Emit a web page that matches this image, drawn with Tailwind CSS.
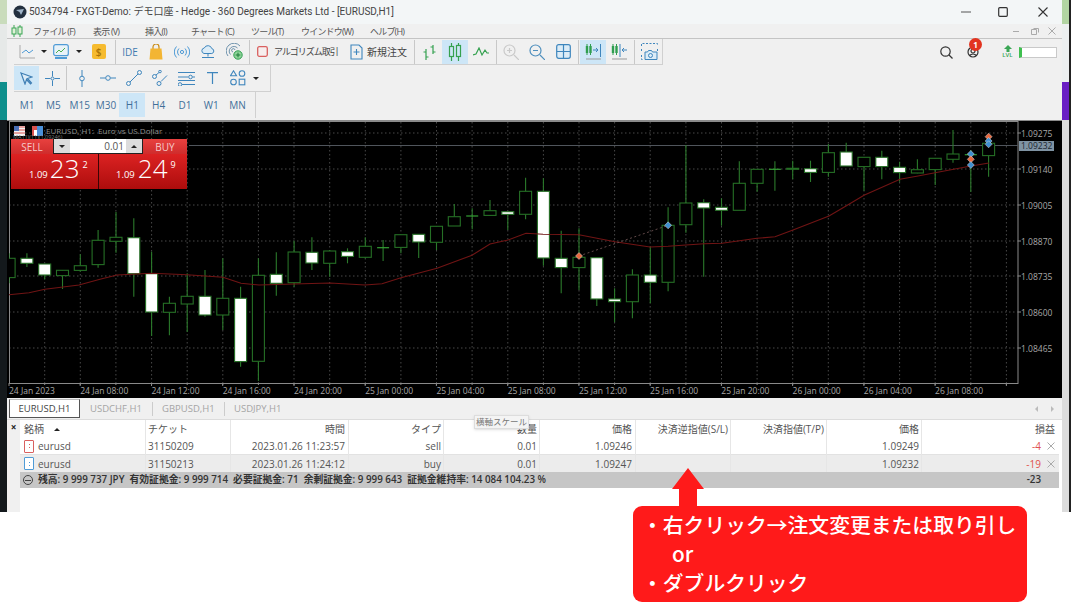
<!DOCTYPE html>
<html lang="ja">
<head>
<meta charset="UTF-8">
<title>5034794 - FXGT-Demo</title>
<script src="https://cdn.jsdelivr.net/npm/@tailwindcss/browser@4"></script>
</head>
<body class="relative w-[1080px] h-[608px] overflow-hidden bg-white text-[#333] font-['Open_Sans','Noto_Sans_CJK_JP',sans-serif]">

<div class="flex h-[512px]">
    <!-- desktop behind the window, left edge -->
    <div class="flex flex-col w-[7px] shrink-0">
        <div class="h-[24px] bg-[#c9dcbc]"></div>
        <div class="h-[58px] bg-[#e6e9e8]"></div>
        <div class="h-[38px] bg-[#0e8f8c]"></div>
        <div class="flex-1 bg-[#14191c]"></div>
    </div>

    <div class="flex flex-col w-[1055px] shrink-0 bg-[#f0f0f0]">
        <!-- title bar -->
        <div class="flex items-center h-[24px] bg-[#f3f6f7]">
            <svg class="ml-[6px] w-[14px] h-[14px]" viewBox="0 0 14 14"><circle cx="7" cy="7" r="6.5" fill="#22303f"/><path d="M3 5l8-1-3 6-1.500-3z" fill="#9fb4c8"/></svg>
            <span class="ml-[2px] text-[10px] leading-none text-[#444] whitespace-nowrap font-['Roboto','Noto_Sans_CJK_JP',sans-serif]">5034794 - FXGT-Demo: デモ口座 - Hedge - 360 Degrees Markets Ltd - [EURUSD,H1]</span>
            <div class="flex-1"></div>
            <svg class="w-[10px] h-[10px] mr-[27px]" viewBox="0 0 10 10"><path d="M0 5h10" stroke="#555" stroke-width="1"/></svg>
            <svg class="w-[10px] h-[10px] mr-[30px]" viewBox="0 0 10 10"><rect x="0.700" y="0.700" width="8.600" height="8.600" rx="1" fill="none" stroke="#333" stroke-width="1.200"/></svg>
            <svg class="w-[10px] h-[10px] mr-[14px]" viewBox="0 0 10 10"><path d="M.5.500l9 9M9.500.500l-9 9" stroke="#333" stroke-width="1.100"/></svg>
        </div>

        <!-- menu bar -->
        <div class="flex items-center h-[14px] text-[9px] tracking-[-0.8px] leading-none text-[#555] border-b border-[#c4c4c4] box-content">
            <svg class="ml-[4px] w-[12px] h-[12px]" viewBox="0 0 12 12"><path d="M3 0v12M9 0v12" stroke="#3aa655"/><rect x="1" y="3" width="4" height="6" fill="#dff0d8" stroke="#3aa655"/><rect x="7" y="2" width="4" height="7" fill="#dff0d8" stroke="#3aa655"/></svg>
            <span class="ml-[10px] w-[60px] whitespace-nowrap">ファイル (F)</span>
            <span class="w-[52px] whitespace-nowrap">表示 (V)</span>
            <span class="w-[46px] whitespace-nowrap">挿入(I)</span>
            <span class="w-[60px] whitespace-nowrap">チャート (C)</span>
            <span class="w-[50px] whitespace-nowrap">ツール(T)</span>
            <span class="w-[69px] whitespace-nowrap">ウインドウ(W)</span>
            <span class="whitespace-nowrap">ヘルプ(H)</span>
            <div class="flex-1"></div>
            <span class="w-[6px] h-px bg-[#aaa] mr-[12px]"></span>
            <svg class="w-[8px] h-[8px] mr-[9px]" viewBox="0 0 8 8"><path d="M2.500 1.500h5v4M.5 2.500h5v5h-5z" fill="none" stroke="#aaa"/></svg>
            <svg class="w-[8px] h-[8px] mr-[6px]" viewBox="0 0 8 8"><path d="M.5.500l7 7M7.500.500l-7 7" stroke="#aaa"/></svg>
        </div>

        <!-- main toolbar -->
        <div class="flex items-center h-[26px] pl-[7px] text-[10px] leading-none">
            <div class="flex items-center h-[26px] border-r border-b border-[#d0d0d0]">
                <div class="flex items-center justify-center w-[25px] h-[24px]"><svg class="w-[16px] h-[15px]" viewBox="0 0 16 15" fill="none"><path d="M1 1v13h15" stroke="#aaa"/><path d="M3 9l4-3 3 3 4-3" stroke="#4f9bd6"/></svg></div>
                <div class="flex items-center justify-center w-[9px]"><span class="border-x-[3px] border-t-[3px] border-x-transparent border-t-[#222]"></span></div>
                <div class="flex items-center justify-center w-[26px] h-[24px]"><svg class="w-[16px] h-[16px]" viewBox="0 0 16 16" fill="none"><rect x=".7" y=".7" width="14.600" height="11" rx="2" fill="#e8f2f8" stroke="#4f9bd6" stroke-width="1.200"/><path d="M3 9l3-3 2 2 4-4" stroke="#4caf50"/><path d="M2 14h12" stroke="#4f9bd6" stroke-width="2"/></svg></div>
                <div class="flex items-center justify-center w-[10px]"><span class="border-x-[3px] border-t-[3px] border-x-transparent border-t-[#222]"></span></div>
                <div class="flex items-center justify-center w-[29px] h-[24px]"><span class="flex items-center justify-center w-[14px] h-[15px] rounded-[2px] bg-[#f6bb2f] text-[10px] font-semibold text-[#a87406]">$</span></div>
                <div class="flex justify-center w-[4px]"><span class="w-px h-[24px] bg-[#c8c8c8]"></span></div>
                <div class="flex items-center justify-center w-[26px] text-[10px] text-[#3f7bb0]">IDE</div>
                <div class="flex items-center justify-center w-[26px]"><svg class="w-[14px] h-[16px]" viewBox="0 0 14 16" fill="none"><path d="M4 6V3a3 3 0 0 1 6 0v3" stroke="#c98a12" stroke-width="1.200"/><path d="M1.500 4.500h11l1 11h-13z" fill="#f3b533"/></svg></div>
                <div class="flex items-center justify-center w-[26px]"><svg class="w-[16px] h-[12px]" viewBox="0 0 16 12" fill="none" stroke="#4f9bd6"><circle cx="8" cy="6" r="1.600"/><path d="M5 2.500a5 5 0 0 0 0 7M11 2.500a5 5 0 0 1 0 7M2.500.5a8 8 0 0 0 0 11M13.500.5a8 8 0 0 1 0 11"/></svg></div>
                <div class="flex items-center justify-center w-[26px]"><svg class="w-[16px] h-[14px]" viewBox="0 0 16 14" fill="none" stroke="#3f86bd"><path d="M4 8.500a2.800 2.800 0 0 1 .3-5.500 4 4 0 0 1 7.500.6 2.500 2.500 0 0 1 0 4.900z" fill="#dcecf7"/><path d="M8 8.500v3M2 12.500h12"/></svg></div>
                <div class="flex items-center justify-center w-[26px]"><svg class="w-[17px] h-[17px]" viewBox="0 0 17 17" fill="none" stroke="#6f93ad"><path d="M2 13A7.500 7.500 0 1 1 14 3"/><path d="M4.500 11.500A4.500 4.500 0 1 1 11.500 5"/><path d="M7 9a1.700 1.700 0 1 1 2-2"/><circle cx="12" cy="12" r="4.200" fill="#8fd39a" stroke="#2f9e4f"/><path d="M12 9.700v4.600M9.700 12h4.600" stroke="#1e7d3b"/></svg></div>
                <div class="flex justify-center w-[4px]"><span class="w-px h-[24px] bg-[#c8c8c8]"></span></div>
                <div class="flex items-center justify-center w-[23px]"><svg class="w-[11px] h-[11px]" viewBox="0 0 11 11"><rect x=".7" y=".7" width="9.600" height="9.600" rx="1.500" fill="#f6eeee" stroke="#d9605f" stroke-width="1.300"/></svg></div>
                <span class="w-[71px] whitespace-nowrap text-[9px] tracking-[-1px] text-[#444]">アルゴリズム取引</span>
                <div class="flex items-center justify-center w-[22px]"><svg class="w-[13px] h-[16px]" viewBox="0 0 13 16" fill="none" stroke="#3f86bd" stroke-width="1.100"><path d="M1 1h8l3 3v11H1z"/><path d="M6.500 5v6M3.500 8h6"/></svg></div>
                <span class="w-[45px] whitespace-nowrap text-[#444]">新規注文</span>
                <div class="flex justify-center w-[4px]"><span class="w-px h-[24px] bg-[#c8c8c8]"></span></div>
                <div class="flex items-center justify-center w-[26px]"><svg class="w-[15px] h-[16px]" viewBox="0 0 15 16" fill="none" stroke="#35a150" stroke-width="1.200"><path d="M4 5v11M1.500 8H4M4 13h2.500M11 1v9M8.500 3H11M11 8h2.500"/></svg></div>
                <div class="flex items-center justify-center w-[26px] h-[24px] bg-[#cde6f7]"><svg class="w-[14px] h-[18px]" viewBox="0 0 14 18" fill="none" stroke="#35a150" stroke-width="1.200"><path d="M3.500 0v18M10.500 0v18"/><rect x="1.500" y="3.500" width="4" height="10" fill="#cde6f7"/><rect x="8.500" y="2.500" width="4" height="11" fill="#cde6f7"/></svg></div>
                <div class="flex items-center justify-center w-[26px]"><svg class="w-[16px] h-[10px]" viewBox="0 0 16 10" fill="none" stroke="#35a150" stroke-width="1.200"><path d="M0 8l3-1 3-6 3 7 3-5 2 3h2"/></svg></div>
                <div class="flex justify-center w-[4px]"><span class="w-px h-[24px] bg-[#c8c8c8]"></span></div>
                <div class="flex items-center justify-center w-[26px]"><svg class="w-[16px] h-[16px]" viewBox="0 0 16 16" fill="none" stroke="#c9c9c9" stroke-width="1.200"><circle cx="6.500" cy="6.500" r="5.500"/><path d="M11 11l5 5M4 6.500h5M6.500 4v5"/></svg></div>
                <div class="flex items-center justify-center w-[26px]"><svg class="w-[16px] h-[16px]" viewBox="0 0 16 16" fill="none" stroke="#4f8fbd" stroke-width="1.200"><circle cx="6.500" cy="6.500" r="5.500"/><path d="M11 11l5 5M4 6.500h5"/></svg></div>
                <div class="flex items-center justify-center w-[26px]"><svg class="w-[15px] h-[15px]" viewBox="0 0 15 15" fill="#dcecf7" stroke="#3f86bd" stroke-width="1.200"><rect x=".7" y=".7" width="13.600" height="13.600" rx="2"/><path d="M7.500 1v13M1 7.500h13"/></svg></div>
                <div class="flex justify-center w-[4px]"><span class="w-px h-[24px] bg-[#c8c8c8]"></span></div>
                <div class="flex items-center justify-center w-[26px] h-[24px] bg-[#cde6f7]"><svg class="w-[17px] h-[17px]" viewBox="0 0 17 17" fill="none"><path d="M2 1v11M5.500 1v11" stroke="#2f9e4f"/><rect x=".8" y="3" width="2.400" height="7" fill="#2f9e4f"/><rect x="4.300" y="3" width="2.400" height="7" fill="#2f9e4f"/><path d="M8 7h5M11 5l2 2-2 2" stroke="#3f86bd"/><path d="M15.500 1v13" stroke="#3f86bd"/><path d="M1 16h15" stroke="#999"/></svg></div>
                <div class="flex items-center justify-center w-[26px]"><svg class="w-[17px] h-[17px]" viewBox="0 0 17 17" fill="none"><path d="M2 1v11M5.500 1v11" stroke="#2f9e4f"/><rect x=".8" y="3" width="2.400" height="7" fill="#2f9e4f"/><rect x="4.300" y="3" width="2.400" height="7" fill="#2f9e4f"/><path d="M9 1v13" stroke="#3f86bd"/><path d="M16 7h-5M13 5l-2 2 2 2" stroke="#3f86bd"/><path d="M1 16h15" stroke="#999"/></svg></div>
                <div class="flex justify-center w-[4px]"><span class="w-px h-[24px] bg-[#c8c8c8]"></span></div>
                <div class="flex items-center justify-center w-[26px]"><svg class="w-[17px] h-[17px]" viewBox="0 0 17 17" fill="none" stroke="#3f86bd"><path d="M.5 3V.5h16V3M.5 6v3M16.500 6v3M.5 12v4.500h2" stroke-dasharray="2 1.500"/><path d="M4 16.500V9h2.500l1-1.500h3l1 1.500H16v7.500z" fill="#dcecf7"/><circle cx="9.500" cy="12.500" r="2"/></svg></div>
            </div>
            <div class="flex-1"></div>
            <!-- right side: search, notifications, level -->
            <svg class="w-[13px] h-[13px] mr-[14px]" viewBox="0 0 13 13" fill="none" stroke="#333" stroke-width="1.200"><circle cx="5.500" cy="5.500" r="4.700"/><path d="M9 9l3.500 3.500"/></svg>
            <div class="relative w-[12px] h-[12px] mr-[23px]">
                <svg class="w-[12px] h-[12px]" viewBox="0 0 12 12" fill="none" stroke="#333" stroke-width="1.200"><circle cx="6" cy="6" r="5"/><circle cx="6" cy="5" r="2"/><path d="M2.500 9.500c2-2 5-2 7 0"/></svg>
                <span class="absolute left-[2px] top-[-8px] flex items-center justify-center w-[13px] h-[13px] rounded-full bg-[#e2331f] text-[8px] font-bold text-white">1</span>
            </div>
            <div class="flex flex-col items-center w-[11px] mr-[6px] text-[#3aa655]">
                <svg class="w-[8px] h-[7px]" viewBox="0 0 8 7"><path d="M4 0l4 4H5.500v3h-3V4H0z" fill="#3aa655"/></svg>
                <span class="text-[6px] leading-[7px] font-semibold">LVL</span>
            </div>
            <div class="w-[38px] h-[11px] mr-[5px] bg-white border border-[#c9c9c9] border-l-[3px] border-l-[#3fbf4f]"></div>
        </div>

        <!-- drawing toolbar -->
        <div class="flex h-[27px] pl-[7px]">
            <div class="flex items-center w-[257px] h-[27px] border-r border-b border-[#d0d0d0]">
                <div class="flex items-center justify-center w-[25px] h-[24px] bg-[#cde6f7]"><svg class="w-[13px] h-[13px]" viewBox="0 0 13 13" fill="#dcecf7" stroke="#3f7fb5" stroke-width="1.200"><path d="M1 1l11 4-4.500 1.500L11.500 11l-1 1-4-4.500L5 12z"/></svg></div>
                <div class="flex items-center justify-center w-[26px]"><svg class="w-[15px] h-[15px]" viewBox="0 0 15 15" fill="none" stroke="#3f86bd"><path d="M7.500 0v5.500M7.500 9.500V15M0 7.500h5.500M9.500 7.500H15"/><circle cx="7.500" cy="7.500" r="1.500"/></svg></div>
                <div class="flex justify-center w-[2px]"><span class="w-px h-[24px] bg-[#c8c8c8]"></span></div>
                <div class="flex items-center justify-center w-[26px] ml-[2px]"><svg class="w-[6px] h-[17px]" viewBox="0 0 6 17" fill="none" stroke="#3f86bd"><path d="M3 0v6M3 11v6"/><circle cx="3" cy="8.500" r="2.300"/></svg></div>
                <div class="flex items-center justify-center w-[26px]"><svg class="w-[16px] h-[6px]" viewBox="0 0 16 6" fill="none" stroke="#3f86bd"><path d="M0 3h5.500M10.500 3H16"/><circle cx="8" cy="3" r="2.300"/></svg></div>
                <div class="flex items-center justify-center w-[26px]"><svg class="w-[16px] h-[16px]" viewBox="0 0 16 16" fill="none" stroke="#3f86bd"><circle cx="2.500" cy="13.500" r="2"/><circle cx="13.500" cy="2.500" r="2"/><path d="M4 12L12 4"/></svg></div>
                <div class="flex items-center justify-center w-[26px]"><svg class="w-[16px] h-[16px]" viewBox="0 0 16 16" fill="none" stroke="#3f86bd"><circle cx="2.500" cy="6.500" r="2"/><circle cx="8" cy="1.500" r="1.300"/><circle cx="7" cy="13.500" r="2"/><path d="M4 5l3-2.500M9 11.500L15 5.500"/></svg></div>
                <div class="flex items-center justify-center w-[26px]"><svg class="w-[17px] h-[15px]" viewBox="0 0 17 15" fill="none" stroke="#3f86bd"><path d="M0 1.500h17M0 6h10M14.500 6H17M0 9.500h17M4 13.500h13"/><circle cx="12.500" cy="6" r="1.800"/><circle cx="2" cy="13.500" r="1.800"/></svg></div>
                <div class="flex items-center justify-center w-[26px]"><svg class="w-[11px] h-[12px]" viewBox="0 0 11 12" fill="none" stroke="#3f86bd" stroke-width="1.200"><path d="M0 .7h11M5.500.7V12"/></svg></div>
                <div class="flex items-center justify-center w-[26px]"><svg class="w-[16px] h-[16px]" viewBox="0 0 16 16" fill="none" stroke="#3f86bd" stroke-width="1.100"><path d="M3.500.8l3 5h-6z"/><circle cx="12" cy="3.500" r="2.800"/><circle cx="3.500" cy="12" r="2.800"/><rect x="9.200" y="9.200" width="5.600" height="5.600"/></svg></div>
                <div class="flex items-center justify-center w-[9px]"><span class="border-x-[3px] border-t-[3px] border-x-transparent border-t-[#222]"></span></div>
            </div>
        </div>

        <!-- timeframes -->
        <div class="flex h-[28px] pl-[7px]">
            <div class="flex items-center w-[242px] h-[26px] border-r border-[#d0d0d0] text-[10px] leading-none text-[#3f6f99]">
                <div class="flex items-center justify-center w-[26.300px] h-[24px]">M1</div>
                <div class="flex items-center justify-center w-[26.300px] h-[24px]">M5</div>
                <div class="flex items-center justify-center w-[26.300px] h-[24px]">M15</div>
                <div class="flex items-center justify-center w-[26.300px] h-[24px]">M30</div>
                <div class="flex items-center justify-center w-[26.300px] h-[24px] bg-[#cde6f7]">H1</div>
                <div class="flex items-center justify-center w-[26.300px] h-[24px]">H4</div>
                <div class="flex items-center justify-center w-[26.300px] h-[24px]">D1</div>
                <div class="flex items-center justify-center w-[26.300px] h-[24px]">W1</div>
                <div class="flex items-center justify-center w-[26.300px] h-[24px]">MN</div>
            </div>
        </div>

        <!-- chart -->
        <div class="relative h-[278px] bg-black border-t border-[#8a8a8a]">
            <svg id="plot" class="absolute left-0 top-[-1px] w-[1055px] h-[278px]" viewBox="7 120 1055 278"></svg>

            <!-- chart header -->
            <div class="absolute left-[7px] top-[5px] flex items-center">
                <svg class="w-[11px] h-[10px]" viewBox="0 0 11 10"><rect width="11" height="10" fill="#f3f3f3"/><path d="M0 1h11M0 4h11M0 7h11" stroke="#d9534f" stroke-width="1.200"/><rect width="5" height="5" fill="#4a6fb5"/></svg>
                <svg class="ml-[7px] w-[11px] h-[10px]" viewBox="0 0 11 10"><rect width="5" height="10" fill="#d9534f"/><rect x="5" y="0" width="6" height="10" fill="#4a90d9"/><rect x="2" y="4" width="3" height="6" fill="#fff"/></svg>
                <span class="ml-[3px] text-[8px] leading-none text-[#8f8f8f] whitespace-nowrap">EURUSD, H1:&nbsp; Euro vs US.Dollar</span>
            </div>
            <span class="absolute left-[6px] top-[14px] text-[5.500px] leading-none text-[#777] whitespace-nowrap">MA (1)(11)(1.09246)</span>

            <!-- one click trading -->
            <div class="absolute left-[4px] top-[18px] flex flex-col w-[176px] h-[50px] text-white">
                <div class="flex h-[18px] bg-gradient-to-b from-[#e8413f] to-[#cf2c2c] text-[10px] leading-none text-[#f6c9c9]">
                    <span class="flex items-center justify-center w-[42px]">SELL</span>
                    <div class="flex w-[90px] border border-t-0 border-[#222] bg-white text-[#555]">
                        <span class="flex items-center justify-center w-[16px] bg-[#dcdcdc]"><span class="border-x-[3px] border-t-[3px] border-x-transparent border-t-[#222]"></span></span>
                        <span class="flex items-center justify-end w-[56px] pr-[2px]">0.01</span>
                        <span class="flex items-center justify-center w-[16px] bg-[#dcdcdc]"><span class="border-x-[3px] border-b-[3px] border-x-transparent border-b-[#222]"></span></span>
                    </div>
                    <span class="flex items-center justify-center flex-1">BUY</span>
                </div>
                <div class="flex flex-1 gap-px bg-[#3a0505]">
                    <div class="flex items-baseline w-[87px] pl-[18px] bg-gradient-to-b from-[#dc2222] to-[#ad0c0c]">
                        <span class="text-[9.500px] leading-[28px]">1.09</span>
                        <span class="ml-[2px] text-[26px] leading-[28px] font-light">23</span>
                        <span class="ml-[3px] text-[9px] leading-none relative top-[-10px]">2</span>
                    </div>
                    <div class="flex items-baseline flex-1 pl-[17px] bg-gradient-to-b from-[#dc2222] to-[#ad0c0c]">
                        <span class="text-[9.500px] leading-[28px]">1.09</span>
                        <span class="ml-[3px] text-[26px] leading-[28px] font-light">24</span>
                        <span class="ml-[3px] text-[9px] leading-none relative top-[-10px]">9</span>
                    </div>
                </div>
            </div>

            <!-- price scale -->
            <span class="absolute left-[1014px] top-[8px] text-[8.500px] leading-[10px] text-[#a8a8a8]">1.09275</span>
            <span class="absolute left-[1012px] top-[20px] px-[2px] bg-[#7f93a3] text-[8.500px] leading-[10px] text-[#1b2530]">1.09232</span>
            <span class="absolute left-[1014px] top-[44px] text-[8.500px] leading-[10px] text-[#a8a8a8]">1.09140</span>
            <span class="absolute left-[1014px] top-[80px] text-[8.500px] leading-[10px] text-[#a8a8a8]">1.09005</span>
            <span class="absolute left-[1014px] top-[116px] text-[8.500px] leading-[10px] text-[#a8a8a8]">1.08870</span>
            <span class="absolute left-[1014px] top-[151px] text-[8.500px] leading-[10px] text-[#a8a8a8]">1.08735</span>
            <span class="absolute left-[1014px] top-[187px] text-[8.500px] leading-[10px] text-[#a8a8a8]">1.08600</span>
            <span class="absolute left-[1014px] top-[223px] text-[8.500px] leading-[10px] text-[#a8a8a8]">1.08465</span>

            <!-- time scale -->
            <div class="absolute left-[2px] top-[265px] flex text-[8.500px] leading-[10px] text-[#a8a8a8] whitespace-nowrap">
                <span class="w-[71.240px]">24 Jan 2023</span>
                <span class="w-[71.240px]">24 Jan 08:00</span>
                <span class="w-[71.240px]">24 Jan 12:00</span>
                <span class="w-[71.240px]">24 Jan 16:00</span>
                <span class="w-[71.240px]">24 Jan 20:00</span>
                <span class="w-[71.240px]">25 Jan 00:00</span>
                <span class="w-[71.240px]">25 Jan 04:00</span>
                <span class="w-[71.240px]">25 Jan 08:00</span>
                <span class="w-[71.240px]">25 Jan 12:00</span>
                <span class="w-[71.240px]">25 Jan 16:00</span>
                <span class="w-[71.240px]">25 Jan 20:00</span>
                <span class="w-[71.240px]">26 Jan 00:00</span>
                <span class="w-[71.240px]">26 Jan 04:00</span>
                <span class="w-[71.240px]">26 Jan 08:00</span>
            </div>
        </div>

        <!-- chart tabs -->
        <div class="relative flex items-center h-[22px] pl-[2px] text-[9.500px] leading-none text-[#a5a5a5] border-b border-[#dcdcdc]">
            <span class="flex items-center justify-center w-[71px] h-[19px] bg-white border border-[#555] border-t-[#bbb] text-[#444]">EURUSD,H1</span>
            <span class="ml-[10px] w-[62px] whitespace-nowrap">USDCHF,H1</span>
            <span class="w-px h-[14px] bg-[#ccc]"></span>
            <span class="ml-[9px] w-[62px] whitespace-nowrap">GBPUSD,H1</span>
            <span class="w-px h-[14px] bg-[#ccc]"></span>
            <span class="ml-[9px] whitespace-nowrap">USDJPY,H1</span>
            <div class="flex-1"></div>
            <span class="border-y-[3px] border-r-[3px] border-y-transparent border-r-[#bbb] mr-[13px]"></span>
            <span class="border-y-[3px] border-l-[3px] border-y-transparent border-l-[#bbb] mr-[8px]"></span>
        </div>

        <!-- trade table -->
        <div class="relative flex flex-1 text-[10px] leading-none">
            <div class="flex justify-center w-[13px] shrink-0 pt-[2px] text-[10px] font-bold text-[#222]">×</div>
            <div class="flex-1 min-w-0 bg-white">
                <div class="grid grid-cols-[126px_85px_118px_95px_96px_96px_95px_96px_95px_137px] w-[1039px] h-[18px] items-center text-[#555]">
                    <span class="pl-[4px] flex items-center gap-[10px]">銘柄 <span class="border-x-[3px] border-b-[3px] border-x-transparent border-b-[#222]"></span></span>
                    <span class="pl-[2px]">チケット</span>
                    <span class="pr-[4px] text-right">時間</span>
                    <span class="pr-[3px] text-right">タイプ</span>
                    <span class="pr-[3px] text-right">数量</span>
                    <span class="pr-[4px] text-right">価格</span>
                    <span class="pr-[3px] text-right">決済逆指値(S/L)</span>
                    <span class="pr-[3px] text-right">決済指値(T/P)</span>
                    <span class="pr-[3px] text-right">価格</span>
                    <span class="pr-[4px] text-right">損益</span>
                </div>
                <div class="grid grid-cols-[126px_85px_118px_95px_96px_96px_95px_96px_95px_137px] w-[1039px] h-[17px] items-center text-[#555] border-b border-[#e2e2e2]">
                    <span class="flex items-center pl-[4px]"><span class="flex flex-col items-center justify-center gap-[2px] w-[10px] h-[13px] rounded-[1px] border border-[#d9605f]"><i class="w-[1px] h-[1px] bg-[#d9605f]"></i><i class="w-[1px] h-[1px] bg-[#d9605f]"></i></span><span class="ml-[4px]">eurusd</span></span>
                    <span class="pl-[2px]">31150209</span>
                    <span class="pr-[4px] text-right">2023.01.26 11:23:57</span>
                    <span class="pr-[3px] text-right">sell</span>
                    <span class="pr-[3px] text-right">0.01</span>
                    <span class="pr-[4px] text-right">1.09246</span>
                    <span></span>
                    <span></span>
                    <span class="pr-[3px] text-right">1.09249</span>
                    <span class="flex justify-end items-center gap-[6px] pr-[4px] text-[#e0524f]">-4 <svg class="w-[8px] h-[8px]" viewBox="0 0 8 8"><path d="M.5.500l7 7M7.500.500l-7 7" stroke="#aaa"/></svg></span>
                </div>
                <div class="grid grid-cols-[126px_85px_118px_95px_96px_96px_95px_96px_95px_137px] w-[1039px] h-[17px] items-center bg-[#ececec] text-[#555]">
                    <span class="flex items-center pl-[4px]"><span class="flex flex-col items-center justify-center gap-[2px] w-[10px] h-[13px] rounded-[1px] border border-[#4f9bd6] bg-white"><i class="w-[1px] h-[1px] bg-[#4f9bd6]"></i><i class="w-[1px] h-[1px] bg-[#4f9bd6]"></i></span><span class="ml-[4px]">eurusd</span></span>
                    <span class="pl-[2px]">31150213</span>
                    <span class="pr-[4px] text-right">2023.01.26 11:24:12</span>
                    <span class="pr-[3px] text-right">buy</span>
                    <span class="pr-[3px] text-right">0.01</span>
                    <span class="pr-[4px] text-right">1.09247</span>
                    <span></span>
                    <span></span>
                    <span class="pr-[3px] text-right">1.09232</span>
                    <span class="flex justify-end items-center gap-[6px] pr-[4px] text-[#e0524f]">-19 <svg class="w-[8px] h-[8px]" viewBox="0 0 8 8"><path d="M.5.500l7 7M7.500.500l-7 7" stroke="#aaa"/></svg></span>
                </div>
                <div class="flex items-center w-[1039px] h-[16px] pl-[3px] bg-[#c6c6c6] text-[9.800px] font-semibold text-[#333] whitespace-nowrap">
                    <span class="flex items-center justify-center w-[10px] h-[10px] rounded-full border border-[#444]"><i class="w-[6px] h-px bg-[#444]"></i></span>
                    <span class="ml-[5px]">残高: 9 999 737 JPY&nbsp; 有効証拠金: 9 999 714&nbsp; 必要証拠金: 71&nbsp; 余剰証拠金: 9 999 643&nbsp; 証拠金維持率: 14 084 104.23 %</span>
                    <span class="flex-1 pr-[18px] text-right">-23</span>
                </div>
            </div>
            <!-- tooltip -->
            <span class="absolute left-[467px] top-[-5px] flex items-center justify-center w-[55px] h-[14px] bg-[#f4f4f4] border border-[#ddd] shadow-sm text-[8.500px] text-[#777] whitespace-nowrap">横軸スケール</span>
            <!-- column separators -->
            <div class="absolute left-[13px] top-0 grid grid-cols-[126px_85px_118px_95px_96px_96px_95px_96px_95px] h-[52px] pointer-events-none">
                <i class="border-r border-[#e6e6e6]"></i><i class="border-r border-[#e6e6e6]"></i><i class="border-r border-[#e6e6e6]"></i><i class="border-r border-[#e6e6e6]"></i><i class="border-r border-[#e6e6e6]"></i><i class="border-r border-[#e6e6e6]"></i><i class="border-r border-[#e6e6e6]"></i><i class="border-r border-[#e6e6e6]"></i><i class="border-r border-[#e6e6e6]"></i>
            </div>
        </div>
    </div>

    <!-- desktop behind the window, right edge -->
    <div class="flex flex-col w-[7px] shrink-0">
        <div class="h-[24px] bg-[#b2d4a2]"></div>
        <div class="h-[58px] bg-[#eceff0]"></div>
        <div class="h-[38px] bg-[#6a1fc4]"></div>
        <div class="flex-1 bg-[#dcdcdc]"></div>
    </div>
    <div class="w-[2px] shrink-0 bg-[#222]"></div>
</div>

<!-- callout -->
<svg class="absolute left-[672px] top-[468px] w-[32px] h-[40px]" viewBox="0 0 32 40"><path d="M16 0L32 21H25V40H7V21H0z" fill="#ff1a1a"/></svg>
<div class="absolute left-[633px] top-[506px] flex flex-col w-[394px] h-[96px] pt-[4px] pl-[9px] rounded-[9px] bg-[#ff1a1a] text-[20.800px] leading-[29px] font-medium text-white font-['Noto_Sans_CJK_JP',sans-serif] whitespace-nowrap">
    <span>・右クリック→注文変更または取り引し</span>
    <span class="pl-[30px]">or</span>
    <span>・ダブルクリック</span>
</div>

<script>
    // [body top, body bottom, wick top, wick bottom, white body] in 3x pixels from chart top
    const candles = [
        [415,473,400,490,0],[415,430,400,441,1],[432,465,432,478,1],[451,467,451,507,0],[437,451,403,455,0],
        [361,434,330,443,0],[352,364,276,398,0],[353,461,295,530,1],[461,576,395,648,1],[550,577,530,646,0],
        [529,552,460,636,0],[529,585,450,590,1],[535,585,415,630,0],[535,725,500,740,1],[466,724,415,783,0],
        [463,490,397,527,1],[396,488,362,500,0],[397,429,352,450,1],[393,430,390,470,0],[395,409,385,430,1],
        [379,412,352,415,0],[383,383,360,423,0],[344,382,344,400,0],[343,366,343,414,1],[319,367,319,390,0],
        [290,318,252,318,0],[288,288,265,328,0],[272,286,240,288,0],[275,283,275,330,1],[214,283,173,298,0],
        [214,414,175,437,1],[415,443,332,520,1],[412,443,325,510,0],[413,537,413,558,1],[537,545,505,607,1],
        [465,545,448,595,0],[465,487,380,550,1],[316,487,262,514,0],[249,314,75,338,0],[248,264,238,470,1],
        [262,271,235,317,1],[190,271,124,271,0],[148,190,148,215,0],[148,148,124,212,0],[145,148,122,178,0],
        [146,157,122,186,1],[98,157,72,170,0],[96,138,68,138,1],[112,140,112,212,0],[112,140,92,178,1],
        [142,158,125,185,1],[149,159,118,160,0],[115,149,115,195,0],[102,118,30,128,0],[104,104,90,216,0],
        [70,107,45,170,0]
    ];
    const ma = [[9,524],[29,518],[45,508],[79,495],[100,478],[117,465],[152,460],[187,464],[223,472],[241,490],
        [259,495],[294,492],[330,489],[365,495],[382,491],[401,473],[437,445],[472,406],[490,372],[508,360],
        [526,340],[543,343],[579,344],[615,365],[650,381],[668,379],[704,371],[722,370],[757,355],[775,350],
        [793,330],[829,288],[846,258],[864,226],[900,178],[918,168],[935,158],[971,138],[989,129]];
    const markers = [[33,408,'#e8693f'],[38,316,'#3f8fd0'],[55,102,'#3f8fd0'],[55,118,'#e8693f'],[55,135,'#3f8fd0'],
        [56,50,'#e8693f'],[56,63,'#3f8fd0'],[56,73,'#3f8fd0']];

    const y = v => (120 + v / 3).toFixed(1);
    const x = i => (9.1 + 17.81 * (i - 1)).toFixed(1);
    let out = '<defs><clipPath id="area"><rect x="9" y="122" width="1009" height="261"/></clipPath></defs>';

    // grid
    for (let gx = 44.7; gx < 1018; gx += 35.62) out += `<path d="M${gx.toFixed(1)} 122V383" stroke="#5a5a5a" stroke-width=".8" stroke-dasharray="1.500 2.500"/>`;
    for (const gy of [133,169,205,241,276,312,348]) out += `<path d="M9 ${gy}H1018" stroke="#5a5a5a" stroke-width=".8" stroke-dasharray="1.500 2.500"/>`;

    // frame and ticks
    out += '<rect x="9.500" y="121.500" width="1008.500" height="262" fill="none" stroke="#8a8a8a"/>';
    out += '<path d="M189 145.500H1018" stroke="#50555c"/>';
    for (let t = 9; t < 1018; t += 71.24) out += `<path d="M${t.toFixed(1)} 383v3" stroke="#8a8a8a"/>`;
    for (let t = 44.7; t < 1018; t += 35.62) out += `<path d="M${t.toFixed(1)} 383v2" stroke="#8a8a8a"/>`;
    for (const gy of [133,169,205,241,276,312,348]) out += `<path d="M1018 ${gy}h3" stroke="#8a8a8a"/>`;

    out += '<g clip-path="url(#area)">';
    candles.forEach((c, n) => {
        const cx = x(n + 1);
        out += `<path d="M${cx} ${y(c[2])}V${y(c[3])}" stroke="#2b7a2b" stroke-width="1.100"/>`;
        if (c[0] === c[1]) out += `<path d="M${cx - 6} ${y(c[0])}H${+cx + 6}" stroke="#35a035" stroke-width="1.200"/>`;
        else out += `<rect x="${cx - 6}" y="${y(c[0])}" width="12" height="${((c[1] - c[0]) / 3).toFixed(1)}" fill="${c[4] ? '#fff' : '#000'}" stroke="#256f25" stroke-width="1.100"/>`;
    });
    out += `<polyline points="${ma.map(p => p[0] + ',' + y(p[1])).join(' ')}" fill="none" stroke="#701414" stroke-width="1.100"/>`;
    out += `<path d="M${x(33)} ${y(408)}L${x(38)} ${y(316)}" stroke="#7a5c5c" stroke-width=".8" stroke-dasharray="2 2.500"/>`;
    markers.forEach(m => {
        const mx = +x(m[0]), my = +y(m[1]);
        out += `<path d="M${mx} ${my - 3.500}l3.500 3.500-3.500 3.500-3.500-3.500z" fill="${m[2]}" stroke="#d8d8d8" stroke-width=".5"/>`;
    });
    out += '</g>';
    document.getElementById('plot').innerHTML = out;
</script>
</body>
</html>
